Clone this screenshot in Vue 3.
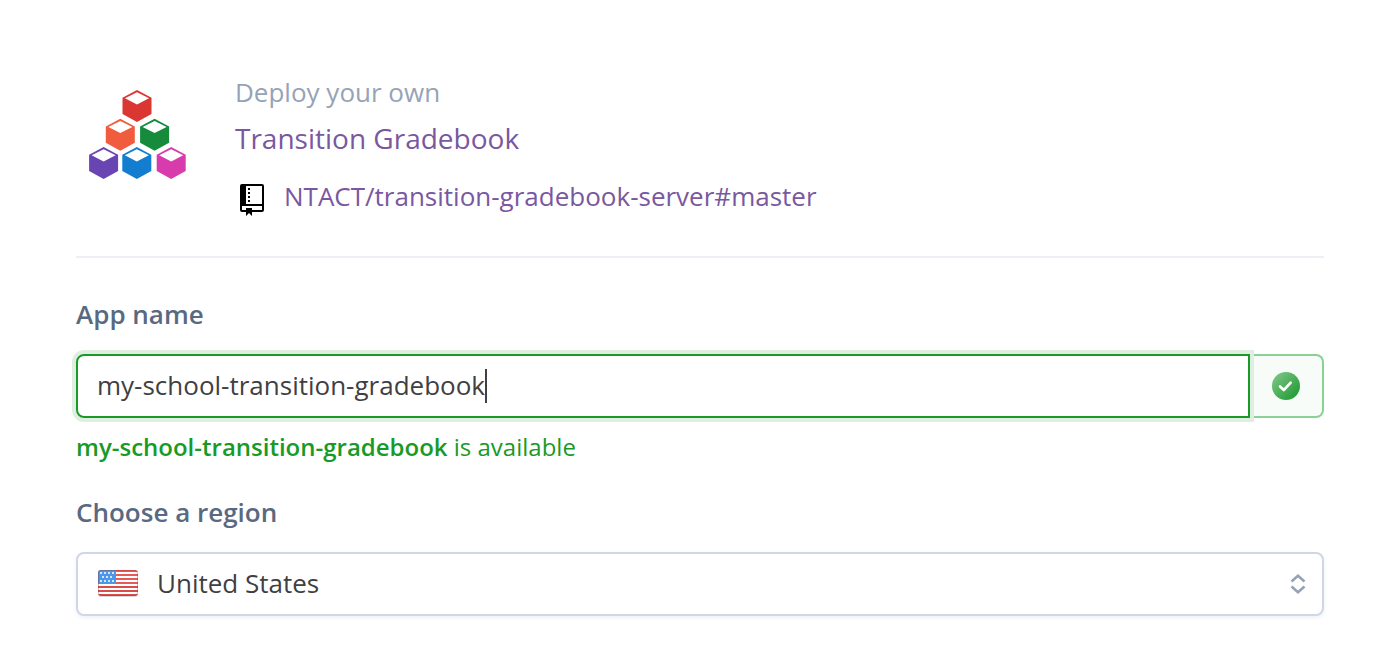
<script setup>
import { ref } from 'vue'

const appName = ref('my-school-transition-gradebook')
const region = ref('United States')

const cubes = [
  { x: 61, y: 14, color: '#da3732' },
  { x: 44.3, y: 42.7, color: '#f15b3e' },
  { x: 78.6, y: 42.7, color: '#158b3b' },
  { x: 27.6, y: 71, color: '#6845b3' },
  { x: 60.8, y: 71, color: '#137dd0' },
  { x: 95.2, y: 71, color: '#d83bab' }
]
const stripes = [0, 4, 8, 12, 16, 20, 24]
const stars = [
  [2, 2], [6, 2], [10, 2], [14, 2],
  [4, 6], [8, 6], [12, 6],
  [2, 10], [6, 10], [10, 10], [14, 10]
]
</script>

<template>
  <main class="page">
    <header class="intro">
      <svg class="logo" viewBox="0 0 120 120" aria-hidden="true">
        <g v-for="cube in cubes" :key="cube.color" :transform="`translate(${cube.x} ${cube.y})`">
          <path d="M0 0L14.5 7.8V24L0 32L-14.5 24V7.8Z" :fill="cube.color" />
          <path d="M0 2.2L12 8.3L0 14.4L-12 8.3Z" fill="#fff" />
        </g>
      </svg>
      <div class="about">
        <p class="lead">Deploy your own</p>
        <a class="title" href="#app">Transition Gradebook</a>
        <a class="repo" href="#source">
          <svg class="book" viewBox="0 0 24 32" aria-hidden="true">
            <path fill-rule="evenodd" d="M2 0H22Q24 0 24 2V26Q24 28 22 28H12V32L9 29L6 32V28H2Q0 28 0 26V2Q0 0 2 0ZM6 2V20H22V2ZM2 22V26H6V24H12V26H22V22Z" />
            <path d="M8 4h2v2H8zM8 8h2v2H8zM8 12h2v2H8zM8 16h2v2H8z" />
          </svg>
          <span>NTACT/transition-gradebook-server#master</span>
        </a>
      </div>
    </header>

    <form class="form" @submit.prevent>
      <label class="label" for="app-name">App name</label>
      <div class="name-row">
        <div class="name-box">
          <input id="app-name" v-model="appName" class="name-input" type="text" autocomplete="off" spellcheck="false" />
          <span class="caret"></span>
        </div>
        <div class="status">
          <svg class="check" viewBox="0 0 28 28" role="img" aria-label="Available">
            <defs>
              <linearGradient id="ok" x1="0" y1="0" x2="1" y2="1">
                <stop offset="0" stop-color="#84c98c" />
                <stop offset="1" stop-color="#16962a" />
              </linearGradient>
            </defs>
            <circle cx="14" cy="14" r="14" fill="url(#ok)" />
            <path d="M8 14.5L11.8 18L18.7 10.7" fill="none" stroke="#fff" stroke-width="2.6" stroke-linecap="round" stroke-linejoin="round" />
          </svg>
        </div>
      </div>
      <p class="message"><strong>{{ appName }}</strong> is available</p>

      <label class="label" for="region">Choose a region</label>
      <div class="region">
        <select id="region" v-model="region" class="select">
          <option>United States</option>
          <option>Europe</option>
        </select>
        <svg class="flag" viewBox="0 0 40 28" aria-hidden="true">
          <defs>
            <clipPath id="flag-shape"><rect width="40" height="26" rx="3" /></clipPath>
          </defs>
          <rect y="1" width="40" height="26" rx="3" fill="#d9d9dc" />
          <g clip-path="url(#flag-shape)">
            <rect width="40" height="26" fill="#fff" />
            <rect v-for="y in stripes" :key="y" :y="y" width="40" height="2" :fill="y > 12 ? '#d94d4c' : '#e55b58'" />
            <rect width="18" height="14" fill="#4b97e8" />
            <rect v-for="([x, y]) in stars" :key="`${x}-${y}`" :x="x" :y="y" width="2" height="2" fill="#d3e7fc" />
          </g>
          <rect x=".5" y=".5" width="39" height="25" rx="3" fill="none" stroke="#963232" stroke-opacity=".35" />
        </svg>
        <svg class="arrows" viewBox="0 0 16 20" aria-hidden="true">
          <path d="M1.5 7.5L8 1.8L14.5 7.5M1.5 12.5L8 18.2L14.5 12.5" fill="none" stroke="#96a3b6" stroke-width="2.6" />
        </svg>
      </div>
    </form>
  </main>
</template>

<style>
body {
  background: #fff;
}
</style>

<style scoped>
.page {
  padding: 74px 64px 38px 76px;
  font-family: "Open Sans", "Noto Sans", sans-serif;
  font-size: 26px;
  line-height: 36px;
  color: #3f3f44;
}
.intro {
  display: flex;
  gap: 39px;
  padding-bottom: 42px;
  border-bottom: 2px solid #ecf0f5;
}
.logo {
  flex: none;
  width: 120px;
  height: 120px;
  margin-top: 2px;
}
.about {
  display: flex;
  flex-direction: column;
  align-items: flex-start;
}
.lead {
  margin: 0 0 8px;
  color: #96a3b6;
}
.title,
.repo {
  color: #79589f;
  text-decoration: none;
}
.title {
  font-size: 28px;
  line-height: 40px;
  margin-bottom: 20px;
}
.repo {
  display: flex;
  gap: 20px;
  padding-left: 5px;
}
.book {
  flex: none;
  width: 24px;
  height: 32px;
  margin-top: 6px;
  margin-bottom: -2px;
  fill: #000;
}
.form {
  display: flex;
  flex-direction: column;
  padding-top: 38px;
}
.label {
  font-weight: 600;
  color: #596981;
  margin-bottom: 22px;
}
.name-row {
  display: flex;
  height: 64px;
}
.name-box {
  position: relative;
  flex: 1;
  display: flex;
  align-items: center;
  min-width: 0;
  padding: 0 19px;
  box-sizing: border-box;
  border: 2px solid #189a26;
  border-radius: 8px 0 0 8px;
  box-shadow: 0 0 0 4px #dfeee0;
}
.name-input {
  field-sizing: content;
  min-width: 0;
  padding: 0 0 2px;
  border: 0;
  outline: 0;
  background: none;
  font: inherit;
  color: inherit;
  caret-color: transparent;
}
.caret {
  width: 2px;
  height: 34px;
  background: #3f3f44;
}
.status {
  display: flex;
  align-items: center;
  justify-content: center;
  width: 74px;
  box-sizing: border-box;
  border: 2px solid #8bd196;
  border-left: 0;
  border-radius: 0 8px 8px 0;
  background: #f7fcf8;
}
.check {
  width: 28px;
  height: 28px;
}
.message {
  margin: 11px 0 29px;
  font-size: 24px;
  color: #189a26;
}
.message strong {
  font-weight: 600;
}
.region {
  position: relative;
}
.select {
  appearance: none;
  display: block;
  width: 100%;
  height: 64px;
  padding: 0 60px 2px 79px;
  border: 2px solid #cfd7e6;
  border-radius: 8px;
  background: #fff;
  box-shadow: 0 2px 4px #eef0f5;
  font: inherit;
  color: inherit;
}
.flag,
.arrows {
  position: absolute;
  pointer-events: none;
}
.flag {
  top: 18px;
  left: 22px;
  width: 40px;
  height: 28px;
}
.arrows {
  top: 22px;
  right: 18px;
  width: 16px;
  height: 20px;
}
</style>
